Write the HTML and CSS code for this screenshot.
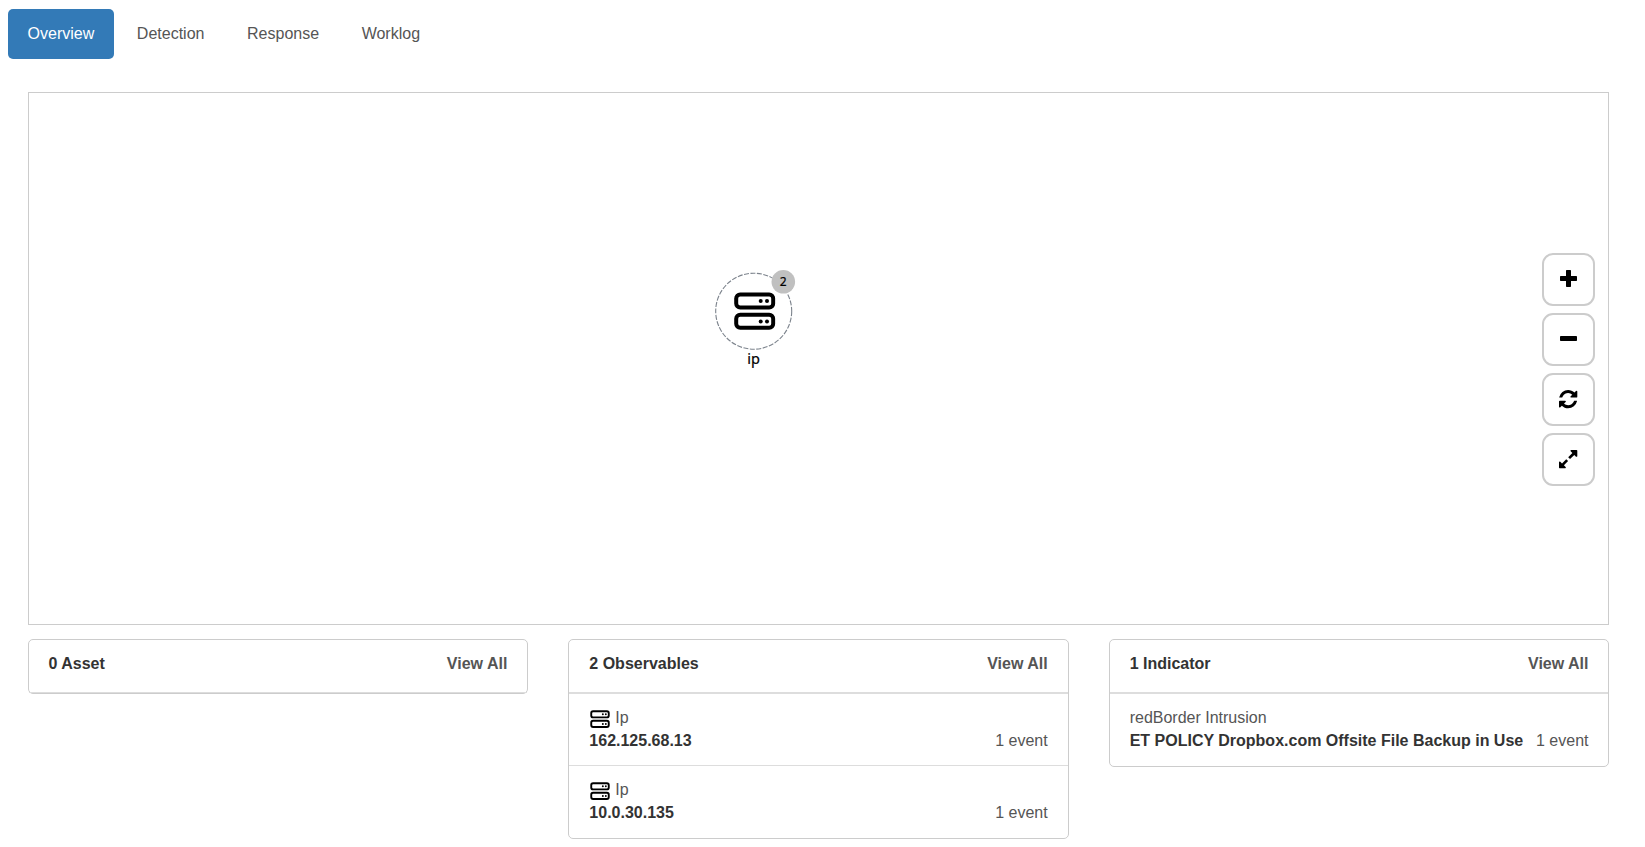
FILE: index.html
```html
<!DOCTYPE html>
<html lang="en">
<head>
<meta charset="utf-8">
<title>Incident overview</title>
<link rel="stylesheet" href="styles.css">
</head>
<body>
<svg class="symbols" aria-hidden="true">
  <symbol id="server" viewBox="0 0 42 38">
    <g fill="none" stroke="#000" stroke-width="4">
      <rect x="2.5" y="2.5" width="37" height="13" rx="4"/>
      <rect x="2.5" y="22.8" width="37" height="13" rx="4"/>
    </g>
    <circle cx="27" cy="9" r="2"/><circle cx="33.3" cy="9" r="2"/>
    <circle cx="27" cy="29.5" r="2"/><circle cx="33.3" cy="29.5" r="2"/>
  </symbol>
</svg>
<nav class="tabs">
  <a class="tab active">Overview</a>
  <a class="tab">Detection</a>
  <a class="tab">Response</a>
  <a class="tab">Worklog</a>
</nav>
<main class="content">
  <section class="graph">
    <svg class="node" width="100" height="110" viewBox="0 0 100 110">
      <circle class="ring" cx="49.7" cy="50.2" r="38"/>
      <use href="#server" x="29.7" y="31" width="42" height="38"/>
      <circle class="badge" cx="79.3" cy="20.8" r="11.8"/>
      <text class="count" x="79.2" y="25.3">2</text>
      <text class="label" x="49.7" y="102.500">ip</text>
    </svg>
    <div class="controls">
      <button class="control raised"><svg width="17" height="17" viewBox="0 0 17 17"><path d="M6.700 0h3.600a.7.7 0 0 1 .7.7V6h5.300a.7.7 0 0 1 .7.7v3.600a.7.7 0 0 1-.7.7H11v5.300a.7.7 0 0 1-.7.7H6.700a.7.7 0 0 1-.7-.7V11H.7a.7.7 0 0 1-.7-.7V6.700A.7.7 0 0 1 .7 6H6V.7A.7.7 0 0 1 6.700 0z"/></svg></button>
      <button class="control raised"><svg width="17" height="17" viewBox="0 0 17 17"><rect y="6" width="17" height="5" rx=".8"/></svg></button>
      <button class="control"><svg width="18.300" height="18.300" viewBox="0 0 1536 1536"><path d="M1511 928q0 5-1 7-64 268-268 434.500T764 1536q-146 0-282.500-55T238 1324l-129 129q-19 19-45 19t-45-19-19-45V960q0-26 19-45t45-19h448q26 0 45 19t19 45-19 45l-137 137q71 66 161 102t187 36q134 0 250-65t186-179q11-17 53-117 8-23 30-23h192q13 0 22.500 9.500t9.500 22.500zm25-800v448q0 26-19 45t-45 19h-448q-26 0-45-19t-19-45 19-45l138-138Q969 256 768 256q-134 0-250 65T332 500q-11 17-53 117-8 23-30 23H50q-13 0-22.500-9.500T18 608v-7q65-268 270-434.500T768 0q146 0 284 55.500T1297 212l130-129q19-19 45-19t45 19 19 45z"/></svg></button>
      <button class="control"><svg width="18.300" height="18.300" viewBox="0 0 1536 1536"><path d="M755 928q0 13-10 23l-332 332 144 144q19 19 19 45t-19 45-45 19H64q-26 0-45-19t-19-45v-448q0-26 19-45t45-19 45 19l144 144 332-332q10-10 23-10t23 10l114 114q10 10 10 23zM1536 64v448q0 26-19 45t-45 19-45-19l-144-144-332 332q-10 10-23 10t-23-10L791 631q-10-10-10-23t10-23l332-332-144-144q-19-19-19-45t19-45 45-19h448q26 0 45 19t19 45z"/></svg></button>
    </div>
  </section>
  <div class="cards">
    <section class="card">
      <header class="card-head"><h2>0 Asset</h2><a>View All</a></header>
    </section>
    <section class="card">
      <header class="card-head"><h2>2 Observables</h2><a>View All</a></header>
      <div class="item">
        <div class="kind"><svg class="kind-icon"><use href="#server"/></svg>Ip</div>
        <div class="row"><strong>162.125.68.13</strong><span>1 event</span></div>
      </div>
      <div class="item">
        <div class="kind"><svg class="kind-icon"><use href="#server"/></svg>Ip</div>
        <div class="row"><strong>10.0.30.135</strong><span>1 event</span></div>
      </div>
    </section>
    <section class="card">
      <header class="card-head"><h2>1 Indicator</h2><a>View All</a></header>
      <div class="item">
        <div class="kind">redBorder Intrusion</div>
        <div class="row"><strong>ET POLICY Dropbox.com Offsite File Backup in Use</strong><span>1 event</span></div>
      </div>
    </section>
  </div>
</main>
</body>
</html>
```
FILE: styles.css
```css
* { box-sizing: border-box; }
body {
  margin: 0;
  background: #fff;
  color: #555;
  font: 16px/22.857px "Liberation Sans", Arial, sans-serif;
}
.symbols { position: absolute; width: 0; height: 0; }
.tabs { display: flex; gap: 3.400px; padding: 9px 8px 0; }
.tab { height: 50px; padding: 14px 19.600px; border-radius: 5px; }
.tab.active { background: #337ab7; color: #fff; }
.content { padding: 33px 36px 0 28px; }
.graph {
  position: relative;
  display: flex;
  justify-content: flex-end;
  height: 533px;
  padding: 160px 13px 0;
  border: 1px solid #ccc;
}
.node { position: absolute; left: 674.7px; top: 168px; }
.ring { fill: #fff; stroke: #7d848d; stroke-width: 1.100; stroke-dasharray: 5 1.500; }
.badge { fill: #c0c0c0; }
.count, .label {
  font-family: "Noto Sans", sans-serif;
  text-anchor: middle;
  fill: #000;
  stroke: #000;
  stroke-width: .2;
}
.count { font-size: 12px; }
.label { font-size: 14.500px; }
.controls { display: flex; flex-direction: column; gap: 7px; }
.control {
  display: flex;
  align-items: center;
  justify-content: center;
  width: 53px;
  height: 53px;
  padding: 0;
  border: 2px solid #ccc;
  border-radius: 11px;
  background: #fff;
}
.control.raised { padding-bottom: 2px; }
.cards {
  display: grid;
  grid-template-columns: repeat(3, 1fr);
  gap: 40px;
  align-items: start;
  margin-top: 14px;
}
.card { border: 1px solid #ccc; border-radius: 5px; }
.card-head {
  display: flex;
  justify-content: space-between;
  height: 53px;
  padding: 13px 20px 0;
  border-bottom: 1px solid #ddd;
  font-weight: bold;
}
.card:first-child .card-head { padding-left: 19.500px; }
.card:last-child .card-head,
.card:last-child .item { padding-right: 19.500px; }
.card-head h2 { margin: 0; font: inherit; color: #333; }
.item { height: 72px; padding: 13px 20px 0; border-top: 1px solid #ddd; }
.item:last-child { height: 73px; }
.kind { display: flex; align-items: center; }
.kind-icon { width: 20px; height: 18px; margin: 1px 5px 0 1px; }
.row { display: flex; justify-content: space-between; }
.row strong { color: #333; }
```
